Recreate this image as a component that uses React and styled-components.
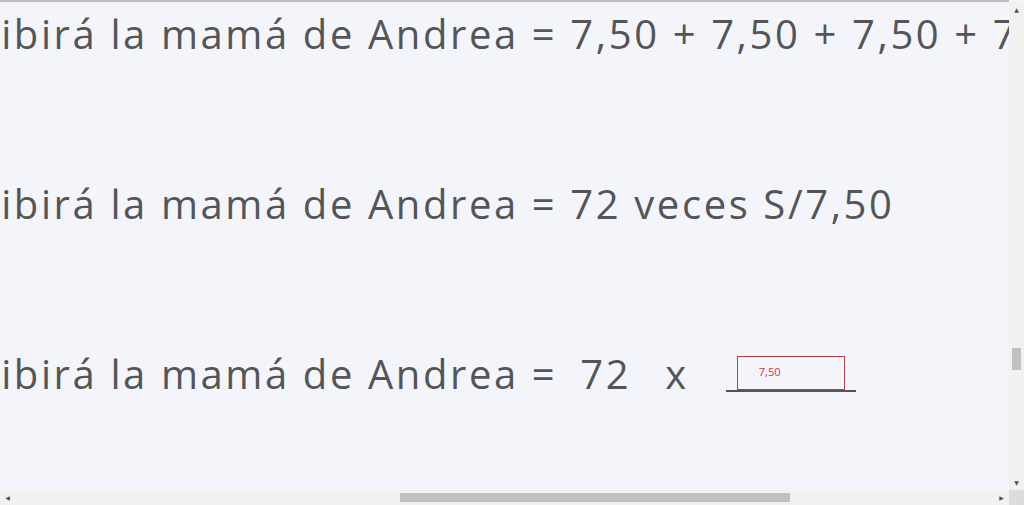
import React, { useLayoutEffect, useRef } from 'react'
import styled, { createGlobalStyle } from 'styled-components'

const Global = createGlobalStyle`
  html, body { margin: 0; padding: 0; height: 100%; overflow: hidden; }
  body { background: #f3f5fa; font-family: "Open Sans", "Liberation Sans", sans-serif; }
  #root { height: 100%; }
`

export default function App() {
  const viewRef = useRef(null)
  const prefixRef = useRef(null)

  useLayoutEffect(() => {
    if (viewRef.current && prefixRef.current) {
      viewRef.current.scrollLeft = prefixRef.current.offsetWidth - 1
    }
  }, [])

  return (
    <Frame>
      <Global />
      <TopRule />
      <Body>
        <Viewport ref={viewRef}>
          <Content>
            <Line>
              <span ref={prefixRef}>Lo que rec</span>ibirá la mamá de Andrea = 7,50 + 7,50 + 7,50 + 7,50 + 7,50 + 7,50 + 7,50 + 7,50 + 7,50
            </Line>
            <Line>Lo que recibirá la mamá de Andrea = 72 veces S/7,50</Line>
            <Line>
              Lo que recibirá la mamá de Andrea =
              <Num>72</Num>
              <Times>x</Times>
              <Blank>
                <AnswerBox>7,50</AnswerBox>
              </Blank>
            </Line>
          </Content>
        </Viewport>
        <VScroll>
          <Arrow>▲</Arrow>
          <VTrack>
            <VThumb />
          </VTrack>
          <Arrow>▼</Arrow>
        </VScroll>
      </Body>
      <HScroll>
        <Arrow>◀</Arrow>
        <HTrack>
          <HThumb />
        </HTrack>
        <Arrow>▶</Arrow>
        <Corner />
      </HScroll>
    </Frame>
  )
}

const Frame = styled.div`
  height: 100vh;
  display: flex;
  flex-direction: column;
  background: #f3f5fa;
`

const TopRule = styled.div`
  height: 2px;
  background: #b9bbbf;
  margin-right: 15px;
`

const Body = styled.div`
  flex: 1;
  display: flex;
  min-height: 0;
`

const Viewport = styled.div`
  flex: 1;
  overflow: hidden;
`

const Content = styled.div`
  display: flex;
  flex-direction: column;
  gap: 122px;
  padding-top: 8px;
  color: #555558;
  font-size: 40px;
  line-height: 48px;
  letter-spacing: 2.6px;
`

const Line = styled.div`
  white-space: nowrap;
  display: flex;
  align-items: center;
  width: max-content;
  height: 48px;
`

const Num = styled.span`
  margin-left: 23px;
`

const Times = styled.span`
  margin-left: 34px;
`

const Blank = styled.span`
  display: inline-flex;
  margin-left: 37px;
  width: 130px;
  padding: 0 11px;
  box-sizing: border-box;
  border-bottom: 2px solid #555;
  letter-spacing: 0;
`

const AnswerBox = styled.span`
  display: flex;
  align-items: center;
  width: 108px;
  height: 34px;
  box-sizing: border-box;
  border: 1.5px solid #c43a44;
  padding: 0 0 4px 21px;
  font-size: 11px;
  line-height: 1;
  color: #c43a44;
`

const VScroll = styled.div`
  width: 15px;
  display: flex;
  flex-direction: column;
  background: #f1f1f1;
`

const Arrow = styled.div`
  width: 15px;
  height: 15px;
  flex: none;
  display: flex;
  align-items: center;
  justify-content: center;
  font-size: 6px;
  color: #505050;
  font-family: "DejaVu Sans", sans-serif;
`

const VTrack = styled.div`
  flex: 1;
  display: flex;
  flex-direction: column;
  align-items: center;
`

const VThumb = styled.div`
  width: 9px;
  height: 22px;
  margin-top: 331px;
  background: #c1c1c1;
`

const HScroll = styled.div`
  height: 15px;
  display: flex;
  background: #f1f1f1;
`

const HTrack = styled.div`
  flex: 1;
  display: flex;
  align-items: center;
`

const HThumb = styled.div`
  height: 9px;
  width: 390px;
  margin-left: 385px;
  background: #c1c1c1;
`

const Corner = styled.div`
  width: 15px;
  background: #dcdcdc;
`
